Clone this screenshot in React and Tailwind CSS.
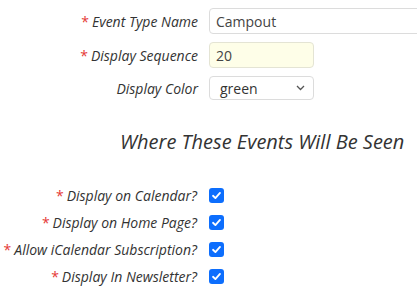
import React from "react";

const Req = () => <span className="text-[#e53935] not-italic mr-[3px]">*</span>;

const Check = () => (
  <span className="w-[15px] h-[15px] rounded-[3px] bg-[#0d6efd] flex items-center justify-center">
    <svg width="11" height="11" viewBox="0 0 12 12" fill="none">
      <path d="M2.2 6.3 4.8 8.8 9.8 3.2" stroke="white" strokeWidth="2" strokeLinecap="round" strokeLinejoin="round" />
    </svg>
  </span>
);

const CheckRow = ({ label }) => (
  <div className="flex items-center h-[27px]">
    <div className="w-[198px] shrink-0 text-right italic text-[#333] pr-[1px]">
      <Req />
      {label}
    </div>
    <div className="ml-[11px]">
      <Check />
    </div>
  </div>
);

const App = () => {
  return (
    <div
      className="w-[417px] h-[298px] bg-white overflow-hidden text-[14px]"
      style={{ fontFamily: '"Open Sans", "Noto Sans", sans-serif' }}
    >
      <div className="pt-[8px] flex flex-col gap-[8px]">
        <div className="flex items-center">
          <label className="w-[198px] shrink-0 text-right italic text-[#333]">
            <Req />
            Event Type Name
          </label>
          <input
            type="text"
            defaultValue="Campout"
            className="ml-[11px] w-[230px] shrink-0 h-[26px] px-[6px] border border-[#dcdcdc] rounded-[4px] text-[#444] outline-none"
          />
        </div>
        <div className="flex items-center">
          <label className="w-[198px] shrink-0 text-right italic text-[#333]">
            <Req />
            Display Sequence
          </label>
          <input
            type="text"
            defaultValue="20"
            className="ml-[11px] w-[105px] h-[26px] px-[6px] border border-[#e4e4d4] bg-[#fefee8] rounded-[4px] text-[#444] outline-none"
          />
        </div>
        <div className="flex items-center">
          <label className="w-[198px] shrink-0 text-right italic text-[#333]">Display Color</label>
          <div className="ml-[11px] w-[105px] h-[24px] border border-[#dcdcdc] rounded-[4px] flex items-center justify-between pl-[10px] pr-[8px] text-[#333]">
            <span>green</span>
            <svg width="9" height="6" viewBox="0 0 9 6" fill="none">
              <path d="M1 1 4.5 4.5 8 1" stroke="#555" strokeWidth="1.3" />
            </svg>
          </div>
        </div>
      </div>
      <div className="mt-[30px] pl-[120px] text-[20px] italic text-[#333] leading-[24px] whitespace-nowrap">
        Where These Events Will Be Seen
      </div>
      <div className="mt-[28px] flex flex-col">
        <CheckRow label="Display on Calendar?" />
        <CheckRow label="Display on Home Page?" />
        <CheckRow label="Allow iCalendar Subscription?" />
        <CheckRow label="Display In Newsletter?" />
      </div>
    </div>
  );
};

export default App;
